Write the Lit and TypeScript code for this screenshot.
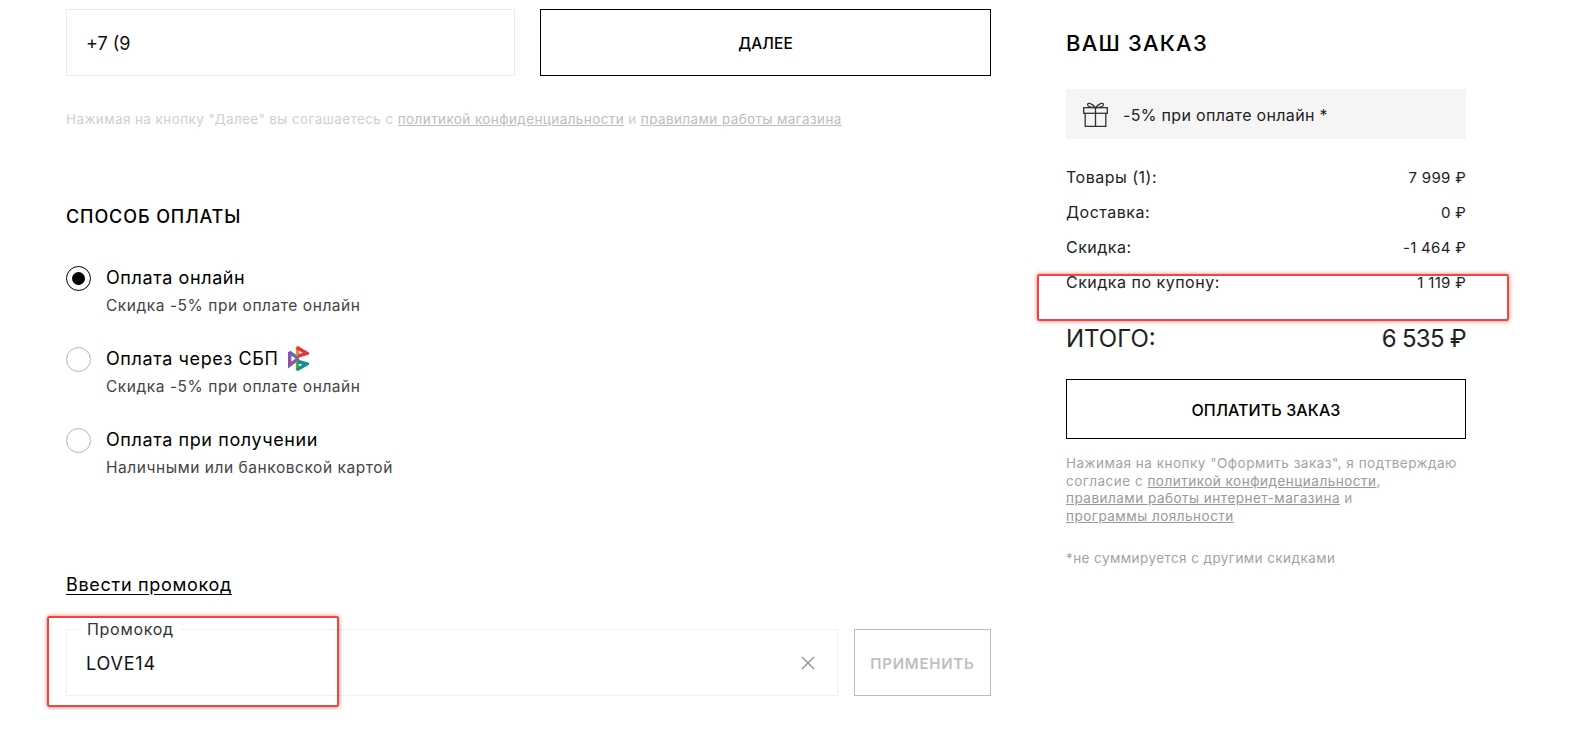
import { LitElement, html, css } from 'lit';
import { customElement } from 'lit/decorators.js';

const PAYMENT_ROWS = [
  { label: 'Товары (1):', value: '7 999 ₽' },
  { label: 'Доставка:', value: '0 ₽' },
  { label: 'Скидка:', value: '-1 464 ₽' },
];

const sbpLogo = html`
  <svg class="sbp" viewBox="0 0 21 25" width="21" height="25" fill="none" stroke-width="3.4">
    <path d="M1 6 L10.5 12.3" stroke="#3f76c4" />
    <path d="M10.5 12.3 L1.7 19 L1.7 6" stroke="#8a55a8" />
    <path d="M9.5 10 L9.5 0.5" stroke="#f08a24" />
    <path d="M9 1.5 L19 7.3 L10 10" stroke="#e5343c" />
    <path d="M9.5 24.5 L9.5 15" stroke="#4caf3c" />
    <path d="M10 15.5 L19 18 L9 23.5" stroke="#12908c" />
  </svg>
`;

const giftIcon = html`
  <svg viewBox="0 0 25 25" width="25" height="25" fill="none" stroke="#333" stroke-width="1.3">
    <rect x="0.7" y="5.7" width="23.6" height="5.6" />
    <path d="M2.2 11.3 V24.3 H22.8 V11.3" />
    <path d="M12.5 5.7 V24.3" />
    <path d="M12.5 5.7 C9 1 5 0.3 4.6 2.6 C4.3 4.8 8 5.7 12.5 5.7 C17 5.7 20.7 4.8 20.4 2.6 C20 0.3 16 1 12.5 5.7 Z" />
  </svg>
`;

@customElement('app-root')
export class AppRoot extends LitElement {
  static override styles = css`
    :host {
      display: block;
      min-height: 731px;
      background: #fff;
      color: #000;
      font-family: Inter, 'Noto Sans', sans-serif;
      overflow: hidden;
    }

    .page {
      display: flex;
      gap: 75px;
      padding: 9px 0 0 66px;
    }

    .main {
      width: 925px;
    }

    .side {
      width: 400px;
    }

    .contact {
      display: grid;
      grid-template-columns: 449px 451px;
      gap: 25px;
    }

    .field {
      height: 67px;
      box-sizing: border-box;
      display: flex;
      align-items: center;
      padding: 1px 19px 0;
      border: 1px solid #ebebeb;
      font-size: 18px;
      color: #111;
    }

    .btn {
      display: flex;
      align-items: center;
      justify-content: center;
      box-sizing: border-box;
      padding-top: 1px;
      border: 1px solid #000;
      font-size: 16px;
      font-weight: 500;
      letter-spacing: 0.1px;
    }

    .contact .btn {
      height: 67px;
      font-size: 15.5px;
    }

    .agree {
      margin: 34px 0 0;
      font-size: 13.5px;
      line-height: 18px;
      letter-spacing: 0.4px;
      color: #cfcfcf;
    }

    .agree a {
      color: #bdbdbd;
      text-decoration: underline;
    }

    h2 {
      margin: 0;
      font-weight: 500;
    }

    .pay-title {
      margin-top: 77px;
      font-size: 18px;
      line-height: 24px;
      letter-spacing: 0.9px;
    }

    .methods {
      display: flex;
      flex-direction: column;
      gap: 27px;
      margin-top: 37px;
    }

    .method {
      display: flex;
      gap: 15px;
      height: 54px;
    }

    .radio {
      flex: none;
      width: 25px;
      height: 25px;
      box-sizing: border-box;
      border: 1px solid #b5b5b5;
      border-radius: 50%;
      display: flex;
      align-items: center;
      justify-content: center;
    }

    .radio.on {
      border-color: #000;
    }

    .radio.on::after {
      content: '';
      width: 13px;
      height: 13px;
      border-radius: 50%;
      background: #000;
    }

    .method-name {
      display: flex;
      align-items: center;
      gap: 9px;
      height: 22px;
      font-size: 18px;
      letter-spacing: 0.6px;
    }

    .sbp {
      margin-left: 1px;
    }

    .method-note {
      margin-top: 8px;
      font-size: 15.5px;
      line-height: 20px;
      letter-spacing: 0.55px;
      color: #444;
    }

    .promo-link {
      display: inline-block;
      margin-top: 91px;
      font-size: 18px;
      line-height: 24px;
      letter-spacing: 0.7px;
      color: #000;
      text-decoration: underline;
      text-underline-offset: 3px;
    }

    .promo {
      display: flex;
      gap: 16px;
      margin-top: 32px;
    }

    .promo-field {
      position: relative;
      width: 772px;
      justify-content: space-between;
      border-color: #f0f0f0;
    }

    .code {
      letter-spacing: 0.8px;
    }

    .legend {
      position: absolute;
      top: -11px;
      left: 14px;
      padding: 0 6px;
      background: #fff;
      font-size: 16px;
      line-height: 20px;
      letter-spacing: 0.7px;
      color: #333;
    }

    .clear {
      margin-right: 3px;
    }

    .promo .btn {
      width: 137px;
      height: 67px;
      border-color: #bdbdbd;
      color: #bfbfbf;
      font-size: 15px;
      font-weight: 600;
      letter-spacing: 0.75px;
    }

    .mark {
      position: absolute;
      box-sizing: border-box;
      border: 2px solid #f2453d;
      border-radius: 2px;
      box-shadow: 0 0 4px rgba(242, 69, 61, 0.7);
      pointer-events: none;
    }

    .mark-promo {
      top: -14px;
      left: -20px;
      width: 292px;
      height: 91px;
    }

    .mark-coupon {
      top: 9px;
      left: -29px;
      width: 472px;
      height: 47px;
    }

    .order-title {
      margin-top: 18px;
      font-size: 22px;
      line-height: 32px;
      letter-spacing: 1.2px;
    }

    .bonus {
      display: flex;
      align-items: center;
      gap: 15px;
      height: 50px;
      box-sizing: border-box;
      margin-top: 30px;
      padding: 1px 0 0 17px;
      background: #f5f5f5;
      font-size: 16px;
      letter-spacing: 0.33px;
      color: #222;
    }

    .rows {
      margin-top: 21px;
    }

    .row {
      position: relative;
      display: flex;
      justify-content: space-between;
      height: 35px;
      font-size: 16px;
      line-height: 35px;
      letter-spacing: 0.5px;
      color: #222;
    }

    .amount {
      font-size: 15px;
      letter-spacing: 0.3px;
    }

    .total {
      display: flex;
      justify-content: space-between;
      margin-top: 23px;
      font-size: 24px;
      line-height: 32px;
      color: #222;
    }

    .total-sum {
      letter-spacing: -0.7px;
    }

    .side .btn {
      height: 60px;
      margin-top: 24px;
    }

    .legal {
      margin: 16px 0 0;
      font-size: 13.5px;
      line-height: 17.5px;
      letter-spacing: 0.5px;
      color: #a3a3a3;
    }

    .legal a {
      color: #999;
      text-decoration: underline;
    }

    .footnote {
      margin: 24px 0 0;
      font-size: 13.5px;
      line-height: 18px;
      letter-spacing: 0.42px;
      color: #a3a3a3;
    }
  `;

  override render() {
    return html`
      <div class="page">
        <section class="main">
          <div class="contact">
            <div class="field">+7 (9</div>
            <div class="btn">ДАЛЕЕ</div>
          </div>
          <p class="agree">
            Нажимая на кнопку "Далее" вы согашаетесь с
            <a>политикой конфиденциальности</a> и <a>правилами работы магазина</a>
          </p>

          <h2 class="pay-title">СПОСОБ ОПЛАТЫ</h2>
          <div class="methods">
            <div class="method">
              <span class="radio on"></span>
              <div>
                <div class="method-name">Оплата онлайн</div>
                <div class="method-note">Скидка -5% при оплате онлайн</div>
              </div>
            </div>
            <div class="method">
              <span class="radio"></span>
              <div>
                <div class="method-name">Оплата через СБП ${sbpLogo}</div>
                <div class="method-note">Скидка -5% при оплате онлайн</div>
              </div>
            </div>
            <div class="method">
              <span class="radio"></span>
              <div>
                <div class="method-name">Оплата при получении</div>
                <div class="method-note">Наличными или банковской картой</div>
              </div>
            </div>
          </div>

          <a class="promo-link">Ввести промокод</a>
          <div class="promo">
            <div class="field promo-field">
              <span class="legend">Промокод</span>
              <span class="code">LOVE14</span>
              <svg class="clear" viewBox="0 0 14 14" width="14" height="14" stroke="#888" stroke-width="1.2">
                <path d="M1 1 L13 13 M13 1 L1 13" />
              </svg>
              <span class="mark mark-promo"></span>
            </div>
            <div class="btn">ПРИМЕНИТЬ</div>
          </div>
        </section>

        <aside class="side">
          <h2 class="order-title">ВАШ ЗАКАЗ</h2>
          <div class="bonus">${giftIcon}<span>-5% при оплате онлайн *</span></div>
          <div class="rows">
            ${PAYMENT_ROWS.map(
              (row) => html`<div class="row"><span>${row.label}</span><span class="amount">${row.value}</span></div>`
            )}
            <div class="row">
              <span>Скидка по купону:</span><span class="amount">1 119 ₽</span>
              <span class="mark mark-coupon"></span>
            </div>
          </div>
          <div class="total"><span>ИТОГО:</span><span class="total-sum">6 535 ₽</span></div>
          <div class="btn">ОПЛАТИТЬ ЗАКАЗ</div>
          <p class="legal">
            Нажимая на кнопку "Оформить заказ", я подтверждаю<br />
            согласие с <a>политикой конфиденциальности</a>,<br />
            <a>правилами работы интернет-магазина</a> и<br />
            <a>программы лояльности</a>
          </p>
          <p class="footnote">*не суммируется с другими скидками</p>
        </aside>
      </div>
    `;
  }
}

declare global {
  interface HTMLElementTagNameMap {
    'app-root': AppRoot;
  }
}
